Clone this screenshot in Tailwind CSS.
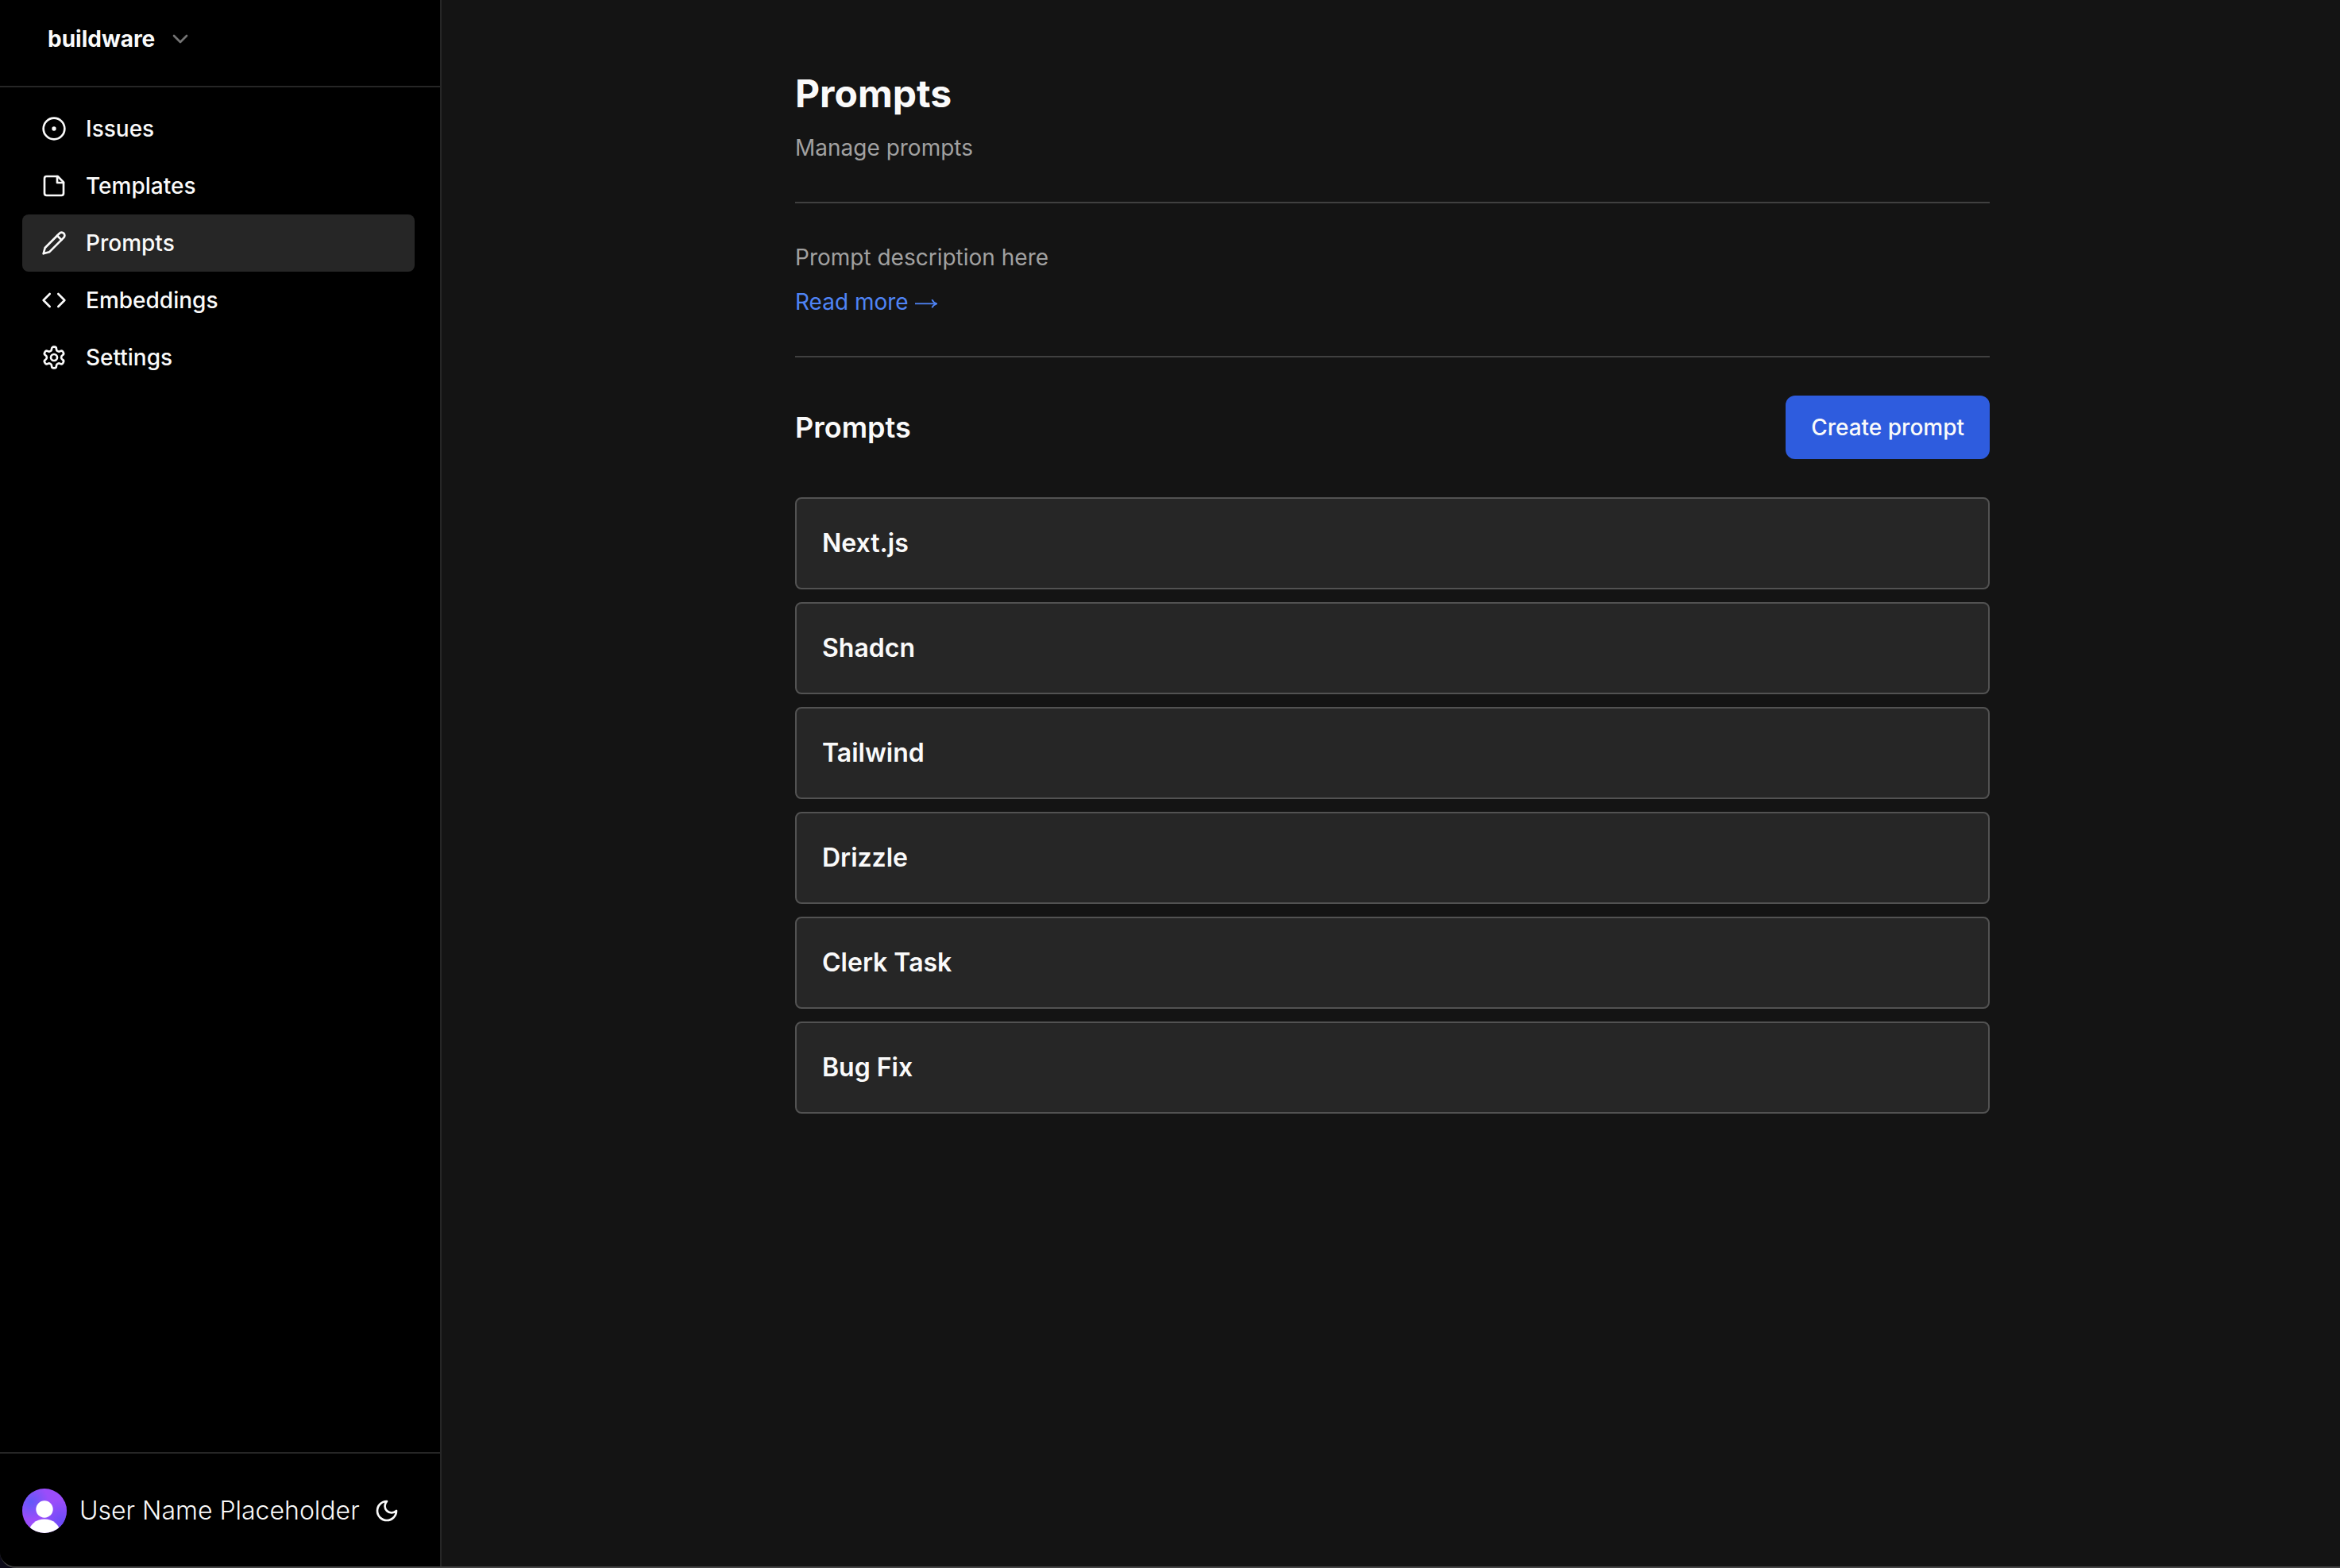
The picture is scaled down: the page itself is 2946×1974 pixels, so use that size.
<!DOCTYPE html>
<html lang="en">
<head>
<meta charset="utf-8">
<title>Prompts</title>
<script src="https://cdn.jsdelivr.net/npm/@tailwindcss/browser@4"></script>
</head>
<body class="bg-[#0d0b1a] font-[Inter,sans-serif] text-[28px] leading-10 text-neutral-50">
<div class="flex min-h-screen overflow-hidden rounded-bl-[20px] border-b-2 border-[#444444] bg-[#141414]">
  <aside class="flex w-[556px] shrink-0 flex-col border-r-2 border-neutral-800 bg-black">
    <div class="border-b-2 border-neutral-800 pt-[29px] pb-[39px] pl-[60px]">
      <button class="flex items-center gap-4 font-bold" type="button">buildware
        <svg class="size-8 text-neutral-500" viewBox="0 0 24 24" fill="none" stroke="currentColor" stroke-width="2" stroke-linecap="round" stroke-linejoin="round"><path d="m6 9 6 6 6-6"/></svg>
      </button>
    </div>
    <nav class="flex flex-col py-4 pr-8 pl-7 font-medium">
      <a href="#" class="flex items-center gap-6 rounded-lg px-6 py-4"><svg class="size-8" viewBox="0 0 24 24" fill="none" stroke="currentColor" stroke-width="2" stroke-linecap="round" stroke-linejoin="round"><circle cx="12" cy="12" r="10"/><circle cx="12" cy="12" r="1"/></svg>Issues</a>
      <a href="#" class="flex items-center gap-6 rounded-lg px-6 py-4"><svg class="size-8" viewBox="0 0 24 24" fill="none" stroke="currentColor" stroke-width="2" stroke-linecap="round" stroke-linejoin="round"><path d="M15.5 3H5a2 2 0 0 0-2 2v14c0 1.1.9 2 2 2h14a2 2 0 0 0 2-2V8.5L15.5 3Z"/><path d="M15 3v6h6"/></svg>Templates</a>
      <a href="#" class="flex items-center gap-6 rounded-lg bg-neutral-800 px-6 py-4"><svg class="size-8" viewBox="0 0 24 24" fill="none" stroke="currentColor" stroke-width="2" stroke-linecap="round" stroke-linejoin="round"><path d="M17 3a2.85 2.83 0 1 1 4 4L7.5 20.5 2 22l1.5-5.5Z"/><path d="m15 5 4 4"/></svg>Prompts</a>
      <a href="#" class="flex items-center gap-6 rounded-lg px-6 py-4"><svg class="size-8" viewBox="0 0 24 24" fill="none" stroke="currentColor" stroke-width="2" stroke-linecap="round" stroke-linejoin="round"><path d="m16 18 6-6-6-6"/><path d="m8 6-6 6 6 6"/></svg>Embeddings</a>
      <a href="#" class="flex items-center gap-6 rounded-lg px-6 py-4"><svg class="size-8" viewBox="0 0 24 24" fill="none" stroke="currentColor" stroke-width="2" stroke-linecap="round" stroke-linejoin="round"><path d="M12.22 2h-.44a2 2 0 0 0-2 2v.18a2 2 0 0 1-1 1.73l-.43.25a2 2 0 0 1-2 0l-.15-.08a2 2 0 0 0-2.73.73l-.22.38a2 2 0 0 0 .73 2.73l.15.1a2 2 0 0 1 1 1.72v.51a2 2 0 0 1-1 1.74l-.15.09a2 2 0 0 0-.73 2.73l.22.38a2 2 0 0 0 2.73.73l.15-.08a2 2 0 0 1 2 0l.43.25a2 2 0 0 1 1 1.73V20a2 2 0 0 0 2 2h.44a2 2 0 0 0 2-2v-.18a2 2 0 0 1 1-1.73l.43-.25a2 2 0 0 1 2 0l.15.08a2 2 0 0 0 2.73-.73l.22-.39a2 2 0 0 0-.73-2.73l-.15-.08a2 2 0 0 1-1-1.74v-.5a2 2 0 0 1 1-1.74l.15-.09a2 2 0 0 0 .73-2.73l-.22-.38a2 2 0 0 0-2.73-.73l-.15.08a2 2 0 0 1-2 0l-.43-.25a2 2 0 0 1-1-1.73V4a2 2 0 0 0-2-2z"/><circle cx="12" cy="12" r="3"/></svg>Settings</a>
    </nav>
    <div class="mt-auto flex items-center gap-4 border-t-2 border-neutral-800 pt-11 pb-[42px] pl-7">
      <svg class="size-14 shrink-0 rounded-full" viewBox="0 0 56 56">
        <defs>
          <radialGradient id="glow-left" cx="0.2" cy="0.3" r="0.4"><stop offset="0" stop-color="#6258f8"/><stop offset="1" stop-color="#6258f8" stop-opacity="0"/></radialGradient>
          <radialGradient id="glow-right" cx="0.9" cy="0.75" r="0.5"><stop offset="0" stop-color="#6a4bf8"/><stop offset="1" stop-color="#6a4bf8" stop-opacity="0"/></radialGradient>
        </defs>
        <rect width="56" height="56" fill="#9b4dfa"/><rect width="56" height="56" fill="url(#glow-left)"/><rect width="56" height="56" fill="url(#glow-right)"/>
        <circle cx="28" cy="26" r="10.7" fill="#fff"/><ellipse cx="28" cy="56" rx="20" ry="17.5" fill="#fff"/>
      </svg>
      <span class="text-[32px] font-light whitespace-nowrap">User Name Placeholder</span>
      <button type="button" aria-label="Toggle dark mode" class="ml-0.5"><svg class="size-8" viewBox="0 0 24 24" fill="none" stroke="currentColor" stroke-width="2" stroke-linecap="round" stroke-linejoin="round"><path d="M12 3a6 6 0 0 0 9 9 9 9 0 1 1-9-9Z"/></svg></button>
    </div>
  </aside>
  <main class="min-w-0 flex-1 pt-[94px] pl-1">
    <div class="mx-auto max-w-[1504px]">
      <h1 class="mb-6 text-5xl leading-none font-bold">Prompts</h1>
      <p class="text-neutral-400">Manage prompts</p>
      <hr class="my-12 border-t-2 border-neutral-700">
      <p class="mb-4 text-neutral-400">Prompt description here</p>
      <a href="#" class="flex items-center gap-2 text-[#4f84f6]">Read more
        <svg class="h-4 w-7" viewBox="0 0 28 16" fill="none" stroke="currentColor" stroke-width="1.8"><path d="M0 10.3h26"/><path d="M21.3 5.2c1.2 2.4 3.2 4.2 5.9 5.1-2.7.9-4.7 2.700-5.900 5.100"/></svg>
      </a>
      <hr class="my-12 border-t-2 border-neutral-700">
      <div class="mb-12 flex items-center justify-between">
        <h2 class="text-4xl font-semibold">Prompts</h2>
        <button type="button" class="rounded-xl bg-[#2e5cde] px-8 py-5 font-medium">Create prompt</button>
      </div>
      <ul class="flex flex-col gap-4 text-[32px] font-semibold">
        <li class="rounded-lg border-2 border-neutral-600 bg-neutral-800 px-8 py-9">Next.js</li>
        <li class="rounded-lg border-2 border-neutral-600 bg-neutral-800 px-8 py-9">Shadcn</li>
        <li class="rounded-lg border-2 border-neutral-600 bg-neutral-800 px-8 py-9">Tailwind</li>
        <li class="rounded-lg border-2 border-neutral-600 bg-neutral-800 px-8 py-9">Drizzle</li>
        <li class="rounded-lg border-2 border-neutral-600 bg-neutral-800 px-8 py-9">Clerk Task</li>
        <li class="rounded-lg border-2 border-neutral-600 bg-neutral-800 px-8 py-9">Bug Fix</li>
      </ul>
    </div>
  </main>
</div>
</body>
</html>
